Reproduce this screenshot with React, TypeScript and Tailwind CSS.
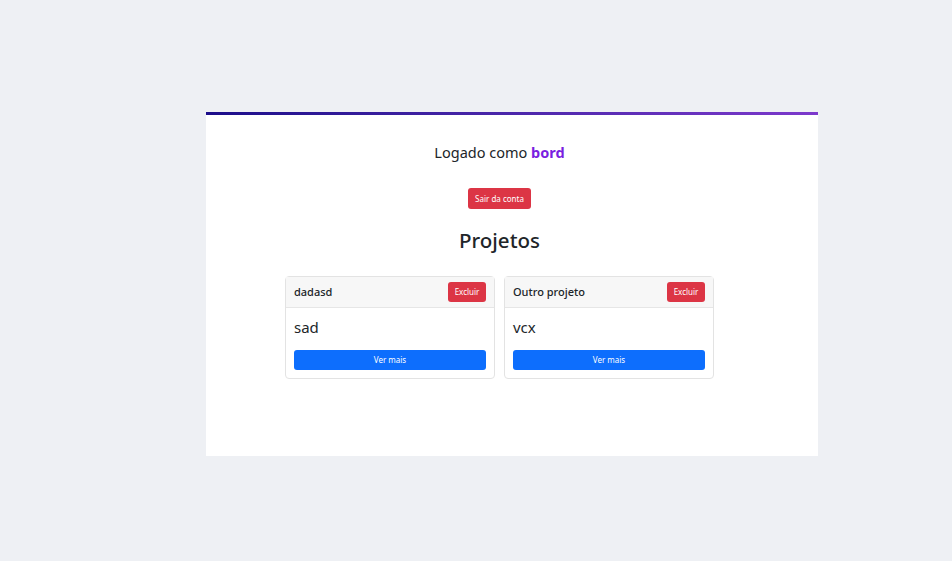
import React from 'react';

const projects = [
  { name: 'dadasd', desc: 'sad' },
  { name: 'Outro projeto', desc: 'vcx' },
];

const ProjectCard: React.FC<{ name: string; desc: string }> = ({ name, desc }) => (
  <div className="w-[210px] rounded-[4px] border border-[#e3e3e3] bg-white">
    <div className="flex h-[31px] items-center justify-between border-b border-[#e6e6e6] bg-[#f7f7f7] px-[8px]">
      <span className="text-[11px] font-medium text-[#212529]">{name}</span>
      <button className="flex h-[20px] w-[38px] items-center justify-center rounded-[3px] bg-[#dc3545] text-[8px] text-white">
        Excluir
      </button>
    </div>
    <div className="px-[8px] pt-[9px] pb-[8px]">
      <p className="h-[20px] text-[15px] leading-[20px] text-[#212529]">{desc}</p>
      <button className="mt-[13px] flex h-[20px] w-full items-center justify-center rounded-[3px] bg-[#0d6efd] text-[8px] text-white">
        Ver mais
      </button>
    </div>
  </div>
);

export default function App() {
  return (
    <div
      className="min-h-[561px] w-full bg-[#eef0f4] pt-[112px]"
      style={{ fontFamily: '"Noto Sans", "Open Sans", sans-serif' }}
    >
      <div className="ml-[206px] h-[344px] w-[612px] bg-white">
        <div className="h-[3px] bg-linear-to-r from-[#1c0d8a] to-[#7d39cc]" />
        <div className="flex flex-col items-center pr-[25px] pt-[26px]">
          <p className="h-[22px] text-[14.5px] leading-[22px] text-[#212529]">
            Logado como <span className="font-bold text-[#7a1fe0]">bord</span>
          </p>
          <button className="mt-[25px] flex h-[21px] w-[63px] items-center justify-center rounded-[3px] bg-[#dc3545] text-[8px] text-white">
            Sair da conta
          </button>
          <h1 className="mt-[16px] h-[30px] text-[20.5px] font-medium leading-[30px] text-[#212529]">
            Projetos
          </h1>
          <div className="mt-[21px] flex gap-[9px]">
            {projects.map((p) => (
              <ProjectCard key={p.name} name={p.name} desc={p.desc} />
            ))}
          </div>
        </div>
      </div>
    </div>
  );
}
